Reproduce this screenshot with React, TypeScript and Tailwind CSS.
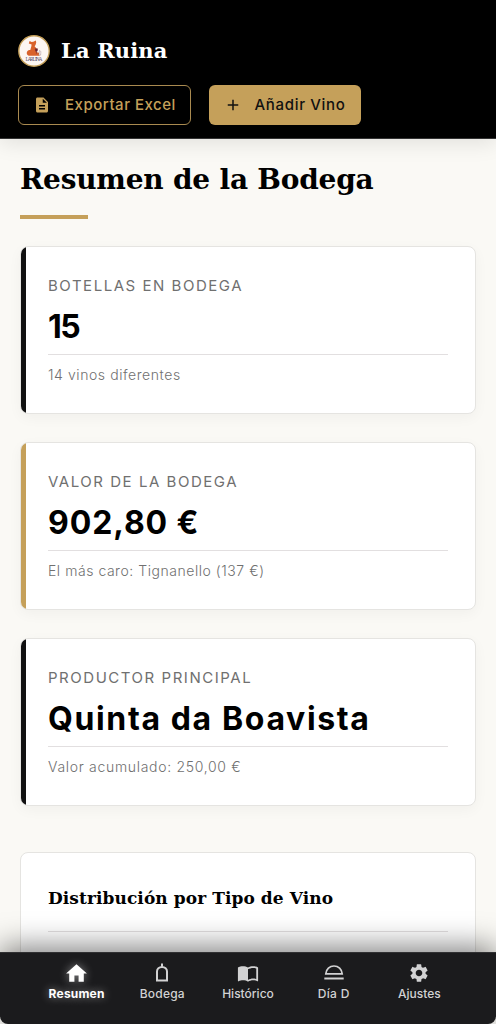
import type { ReactNode } from "react";
import { MdAdd, MdDescription, MdHome, MdSettings } from "react-icons/md";

const stats = [
  {
    label: "Botellas en Bodega",
    value: "15",
    note: "14 vinos diferentes",
    bar: "bg-[#111111]",
    valueStyle: "tracking-[-1.5px]",
    noteStyle: "tracking-[0.57px]",
  },
  {
    label: "Valor de la Bodega",
    value: "902,80 €",
    note: "El más caro: Tignanello (137 €)",
    bar: "bg-[#c5a05a]",
    valueStyle: "tracking-[0.9px]",
    noteStyle: "tracking-[0.54px]",
  },
  {
    label: "Productor Principal",
    value: "Quinta da Boavista",
    note: "Valor acumulado: 250,00 €",
    bar: "bg-[#111111]",
    valueStyle: "tracking-[1.63px]",
    noteStyle: "tracking-[0.69px]",
  },
];

const Logo = () => (
  <svg width="32" height="32" viewBox="0 0 32 32">
    <circle cx="16" cy="16" r="15.2" fill="#fdf6f2" stroke="#c5a05a" strokeWidth="1.4" />
    <path
      d="M11.6 6l2 1 1.7-.3 2.6-1.3.3 2.4-.7 2.2-.9 1.2 2 2.4-.6 2.6 1.6 1.4 2 .4.6 1.6-1.2 1.2H11c-2.2-.6-2.9-3.2-1.5-4.9.9-1 2-1.1 2.8-.8l1-3.5.3-2.2-2.8-1z"
      fill="#d9622b"
    />
    <path d="M17.2 13.8h2.4l-.4 2.4-.8.6-.8-.6zM18.4 16.8v2" stroke="#6b2737" strokeWidth=".5" fill="#6b2737" />
    <path d="M21.5 15.5l1.4 1-.3 3.6h-1.8z" fill="#fff" stroke="#8a6a70" strokeWidth=".4" />
    <text
      x="16"
      y="26.4"
      textAnchor="middle"
      fontSize="5.5"
      textLength="17"
      fill="#5c5370"
      fontFamily="Liberation Serif, serif"
    >
      LA RUINA
    </text>
  </svg>
);

const BottleIcon = () => (
  <svg width="22" height="22" viewBox="0 0 22 22" fill="none" stroke="currentColor" strokeWidth="2">
    <path d="M11 1.4v3.4" />
    <path d="M6 18.6V9.4C6 6.8 8.1 4.9 11 4.9s5 1.9 5 4.5v9.2z" />
  </svg>
);

const BookIcon = () => (
  <svg width="22" height="22" viewBox="0 0 24 24" fill="currentColor">
    <path d="M21 5c-1.11-.35-2.33-.5-3.5-.5-1.95 0-4.05.4-5.5 1.5-1.45-1.1-3.55-1.5-5.5-1.5S2.45 4.9 1 6v14.65c0 .25.25.5.5.5.1 0 .15-.05.25-.05C3.1 20.45 5.05 20 6.5 20c1.95 0 4.05.4 5.5 1.5 1.35-.85 3.8-1.5 5.5-1.5 1.65 0 3.35.3 4.75 1.05.1.05.15.05.25.05.25 0 .5-.25.5-.5V6c-.6-.45-1.25-.75-2-1zm0 13.5c-1.1-.35-2.3-.5-3.5-.5-1.7 0-4.15.65-5.5 1.5V8c1.35-.85 3.8-1.5 5.5-1.5 1.2 0 2.4.15 3.5.5v11.5z" />
  </svg>
);

const ClocheIcon = () => (
  <svg width="22" height="22" viewBox="0 0 22 22" fill="none" stroke="currentColor" strokeWidth="1.7">
    <path d="M2.8 11.8C3.2 7.2 6.6 4 11 4s7.8 3.2 8.2 7.8z" />
    <path d="M1.3 16.5h19.4" strokeWidth="2" />
  </svg>
);

const Card = ({ stat }: { stat: (typeof stats)[number] }) => (
  <article className="flex h-[168px] overflow-hidden rounded-lg border border-[#e5e4e1] bg-white shadow-[0_4px_14px_rgba(0,0,0,0.04)]">
    <div className={`w-[5px] shrink-0 ${stat.bar}`} />
    <div className="flex-1 pt-[27px] pr-[27px] pl-[22px] whitespace-nowrap">
      <h3 className="text-[15px] leading-6 tracking-[1.53px] text-[#707070] uppercase">{stat.label}</h3>
      <p className={`mt-1 h-[52px] text-[32px] leading-[50px] font-bold text-black ${stat.valueStyle}`}>
        {stat.value}
      </p>
      <p className={`border-t border-[#e2dfe0] pt-[10px] text-sm leading-5 font-light text-[#707070] ${stat.noteStyle}`}>
        {stat.note}
      </p>
    </div>
  </article>
);

const NavItem = ({ label, style, children }: { label: string; style: string; children: ReactNode }) => (
  <a className={`flex w-[85.7px] flex-col items-center text-xs whitespace-nowrap ${style}`}>
    <span className="flex h-[22px] items-center">{children}</span>
    <span className="mt-px leading-[18px]">{label}</span>
  </a>
);

const App = () => (
  <div className="relative h-screen overflow-hidden bg-[#faf9f5] font-['Inter',sans-serif]">
    <header className="h-[139px] border-b border-[#333333] bg-black px-[18px] pt-[35px] shadow-[0_4px_20px_rgba(0,0,0,0.1)]">
      <div className="flex h-8 items-center gap-[11px]">
        <Logo />
        <h1 className="font-['DejaVu_Serif',serif] text-[21px] leading-8 font-bold tracking-[0.15px] whitespace-nowrap text-white">
          La Ruina
        </h1>
      </div>
      <div className="mt-[18px] flex gap-[18px] text-[15px] font-medium whitespace-nowrap">
        <button className="flex h-10 w-[172.5px] items-center rounded-md border border-[#a98a50] pl-[14px] text-[#c5a05a]">
          <MdDescription size={18} />
          <span className="ml-[14px] tracking-[0.52px]">Exportar Excel</span>
        </button>
        <button className="flex h-10 w-[152px] items-center rounded-md bg-[#c5a05a] pl-[15px] text-[#111111]">
          <MdAdd size={18} />
          <span className="ml-[13px] tracking-[0.68px]">Añadir Vino</span>
        </button>
      </div>
    </header>
    <main className="px-5 pt-5">
      <h2 className="h-[56px] font-['DejaVu_Serif',serif] text-[28px] leading-[42px] font-bold tracking-[-0.22px] whitespace-nowrap text-black">
        Resumen de la Bodega
      </h2>
      <div className="h-1 w-[68px] bg-[#c5a05a]" />
      <section className="mt-[27px] flex flex-col gap-[28.2px]">
        {stats.map((stat) => (
          <Card key={stat.label} stat={stat} />
        ))}
      </section>
      <section className="mt-[45.6px] h-[300px] rounded-lg border border-[#e5e4e1] bg-white px-[27px] pt-[30px]">
        <h3 className="h-[49px] border-b border-[#e2dfe0] font-['DejaVu_Serif',serif] text-[17px] leading-[30px] font-bold tracking-[0.08px] whitespace-nowrap text-black">
          Distribución por Tipo de Vino
        </h3>
      </section>
    </main>
    <nav className="absolute inset-x-0 bottom-0 flex h-[72px] justify-center rounded-b-lg border-t border-[#303032] bg-[#1b1b1d] pt-[9px] text-[#d2d2d3] shadow-[0_-5px_30px_rgba(0,0,0,0.5)]">
      <NavItem
        label="Resumen"
        style="font-bold tracking-[0.2px] text-white [text-shadow:0_0_8px_rgba(255,255,255,0.5)] [&_svg]:drop-shadow-[0_0_5px_rgba(255,255,255,0.45)]"
      >
        <MdHome size={25} />
      </NavItem>
      <NavItem label="Bodega" style="font-medium tracking-[0.2px]">
        <BottleIcon />
      </NavItem>
      <NavItem label="Histórico" style="font-medium">
        <BookIcon />
      </NavItem>
      <NavItem label="Día D" style="font-medium tracking-[0.3px]">
        <ClocheIcon />
      </NavItem>
      <NavItem label="Ajustes" style="font-medium">
        <MdSettings size={22} />
      </NavItem>
    </nav>
  </div>
);

export default App;
